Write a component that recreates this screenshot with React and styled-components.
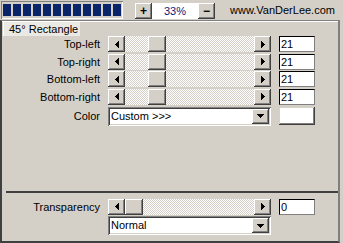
import React from 'react';
import styled, { createGlobalStyle } from 'styled-components';

const Global = createGlobalStyle`
  html, body { margin: 0; padding: 0; background: #d4d0c8; }
  body { font-family: "Liberation Sans", Arial, sans-serif; font-size: 11px; color: #000; }
`;

const raisedShadow = 'inset -1px -1px #404040, inset 1px 1px #fff, inset -2px -2px #808080';
const sunkenShadow = 'inset 1px 1px #808080, inset -1px -1px #fff, inset 2px 2px #404040, inset -2px -2px #d4d0c8';

const Window = styled.div`
  width: 343px;
  height: 243px;
  display: flex;
  flex-direction: column;
  overflow: hidden;
  background: #d4d0c8;
`;

const TopBar = styled.div`
  height: 20px;
  display: flex;
  align-items: flex-start;
  padding-left: 1px;
  box-sizing: border-box;
`;

const Progress = styled.div`
  margin-top: 1px;
  width: 122px;
  height: 18px;
  box-sizing: border-box;
  padding: 3px 0 0 2px;
  display: flex;
  gap: 2px;
  box-shadow: inset 1px 1px #808080, inset -1px -1px #fff;
`;

const Block = styled.div`
  width: 8px;
  height: 12px;
  background: #0a246a;
`;

const ZoomGroup = styled.div`
  margin-left: 12px;
  margin-top: 3px;
  display: flex;
`;

const SpinButton = styled.div`
  width: 17px;
  height: 16px;
  box-shadow: ${raisedShadow};
  display: flex;
  align-items: center;
  justify-content: center;
  font-weight: bold;
  font-size: 12px;
  line-height: 16px;
`;

const ZoomValue = styled.div`
  width: 46px;
  height: 16px;
  background: #fff;
  color: #0a1a7a;
  text-align: center;
  line-height: 16px;
  font-size: 11px;
`;

const Url = styled.div`
  margin-left: 15px;
  margin-top: 4px;
  line-height: 13px;
  white-space: nowrap;
`;

const Panel = styled.div`
  flex: 1;
  margin-right: 3px;
  box-sizing: border-box;
  border-top: 1px solid #808080;
  border-left: 2px solid #404040;
  border-right: 2px solid #808080;
  border-bottom: 2px solid #404040;
  box-shadow: inset 0 1px #fff;
  padding-top: 1px;
  display: flex;
  flex-direction: column;
`;

const Tab = styled.div`
  align-self: flex-start;
  margin-left: 1px;
  height: 14px;
  line-height: 14px;
  padding: 0 2px 0 6px;
  background: #ebe9e3;
  box-shadow: inset 1px 0 #fff;
  white-space: nowrap;
`;

const Grid = styled.div`
  display: grid;
  grid-template-columns: 98px 163px 36px;
  column-gap: 8px;
  row-gap: ${p => p.$gap || '1.67px'};
  align-items: center;
  margin-top: ${p => p.$top || '0px'};
`;

const Label = styled.div`
  text-align: right;
  line-height: 16px;
  white-space: nowrap;
`;

const Slider = styled.div`
  display: flex;
  height: 16px;
`;

const ArrowButton = styled.div`
  width: 17px;
  height: 16px;
  flex: none;
  box-shadow: ${raisedShadow};
  background: #d4d0c8;
  display: flex;
  align-items: center;
  justify-content: center;
`;

const Track = styled.div`
  flex: 1;
  display: flex;
  background: repeating-conic-gradient(#fff 0 25%, #d4d0c8 0 50%) 0 0 / 2px 2px;
`;

const Thumb = styled.div`
  width: 18px;
  height: 16px;
  flex: none;
  background: #d4d0c8;
  box-shadow: ${raisedShadow};
`;

const NumberBox = styled.div`
  width: 36px;
  height: 16px;
  box-sizing: border-box;
  background: #fff;
  border-top: 1px solid #000;
  border-left: 1px solid #000;
  border-right: 1px solid #808080;
  border-bottom: 1px solid #808080;
  padding-left: 1px;
  line-height: 14px;
`;

const Select = styled.div`
  height: 19px;
  box-sizing: border-box;
  background: #fff;
  box-shadow: ${sunkenShadow};
  padding: 2px;
  display: flex;
  align-items: center;
`;

const SelectText = styled.span`
  flex: 1;
  padding-left: 1px;
  line-height: 15px;
  white-space: nowrap;
`;

const SelectButton = styled.div`
  width: 17px;
  height: 15px;
  background: #d4d0c8;
  box-shadow: ${raisedShadow};
  display: flex;
  align-items: center;
  justify-content: center;
`;

const Swatch = styled.div`
  width: 36px;
  height: 18px;
  background: #fff;
  box-shadow: inset -1px -1px #404040, inset 1px 1px #d4d0c8, inset -2px -2px #808080, inset 2px 2px #fff;
`;

const Separator = styled.div`
  margin-top: 65px;
  margin-left: 4px;
  height: 2px;
  background: #404040;
`;

const Empty = styled.div``;

const LeftArrow = () => (
  <svg width="4" height="7" viewBox="0 0 4 7" shapeRendering="crispEdges">
    <rect x="3" y="0" width="1" height="7" fill="#000" />
    <rect x="2" y="1" width="1" height="5" fill="#000" />
    <rect x="1" y="2" width="1" height="3" fill="#000" />
    <rect x="0" y="3" width="1" height="1" fill="#000" />
  </svg>
);

const RightArrow = () => (
  <svg width="4" height="7" viewBox="0 0 4 7" shapeRendering="crispEdges">
    <rect x="0" y="0" width="1" height="7" fill="#000" />
    <rect x="1" y="1" width="1" height="5" fill="#000" />
    <rect x="2" y="2" width="1" height="3" fill="#000" />
    <rect x="3" y="3" width="1" height="1" fill="#000" />
  </svg>
);

const DownArrow = () => (
  <svg width="7" height="4" viewBox="0 0 7 4" shapeRendering="crispEdges">
    <rect x="0" y="0" width="7" height="1" fill="#000" />
    <rect x="1" y="1" width="5" height="1" fill="#000" />
    <rect x="2" y="2" width="3" height="1" fill="#000" />
    <rect x="3" y="3" width="1" height="1" fill="#000" />
  </svg>
);

const TRACK = 129;
const THUMB = 18;

const SliderControl = ({ value, max = 100 }) => (
  <Slider>
    <ArrowButton><LeftArrow /></ArrowButton>
    <Track>
      <Thumb style={{ marginLeft: Math.round((value / max) * (TRACK - THUMB)) }} />
    </Track>
    <ArrowButton><RightArrow /></ArrowButton>
  </Slider>
);

const Dropdown = ({ text }) => (
  <Select>
    <SelectText>{text}</SelectText>
    <SelectButton><DownArrow /></SelectButton>
  </Select>
);

const corners = [
  { label: 'Top-left', value: 21 },
  { label: 'Top-right', value: 21 },
  { label: 'Bottom-left', value: 21 },
  { label: 'Bottom-right', value: 21 },
];

export default function App() {
  return (
    <Window>
      <Global />
      <TopBar>
        <Progress>
          {Array.from({ length: 12 }).map((_, i) => <Block key={i} />)}
        </Progress>
        <ZoomGroup>
          <SpinButton>+</SpinButton>
          <ZoomValue>33%</ZoomValue>
          <SpinButton>−</SpinButton>
        </ZoomGroup>
        <Url>www.VanDerLee.com</Url>
      </TopBar>
      <Panel>
        <Tab>45° Rectangle</Tab>
        <Grid>
          {corners.map(c => (
            <React.Fragment key={c.label}>
              <Label>{c.label}</Label>
              <SliderControl value={c.value} />
              <NumberBox>{c.value}</NumberBox>
            </React.Fragment>
          ))}
          <Label>Color</Label>
          <Dropdown text="Custom >>>" />
          <Swatch />
        </Grid>
        <Separator />
        <Grid $top="6px">
          <Label>Transparency</Label>
          <SliderControl value={0} />
          <NumberBox>0</NumberBox>
          <Empty />
          <Dropdown text="Normal" />
          <Empty />
        </Grid>
      </Panel>
    </Window>
  );
}
